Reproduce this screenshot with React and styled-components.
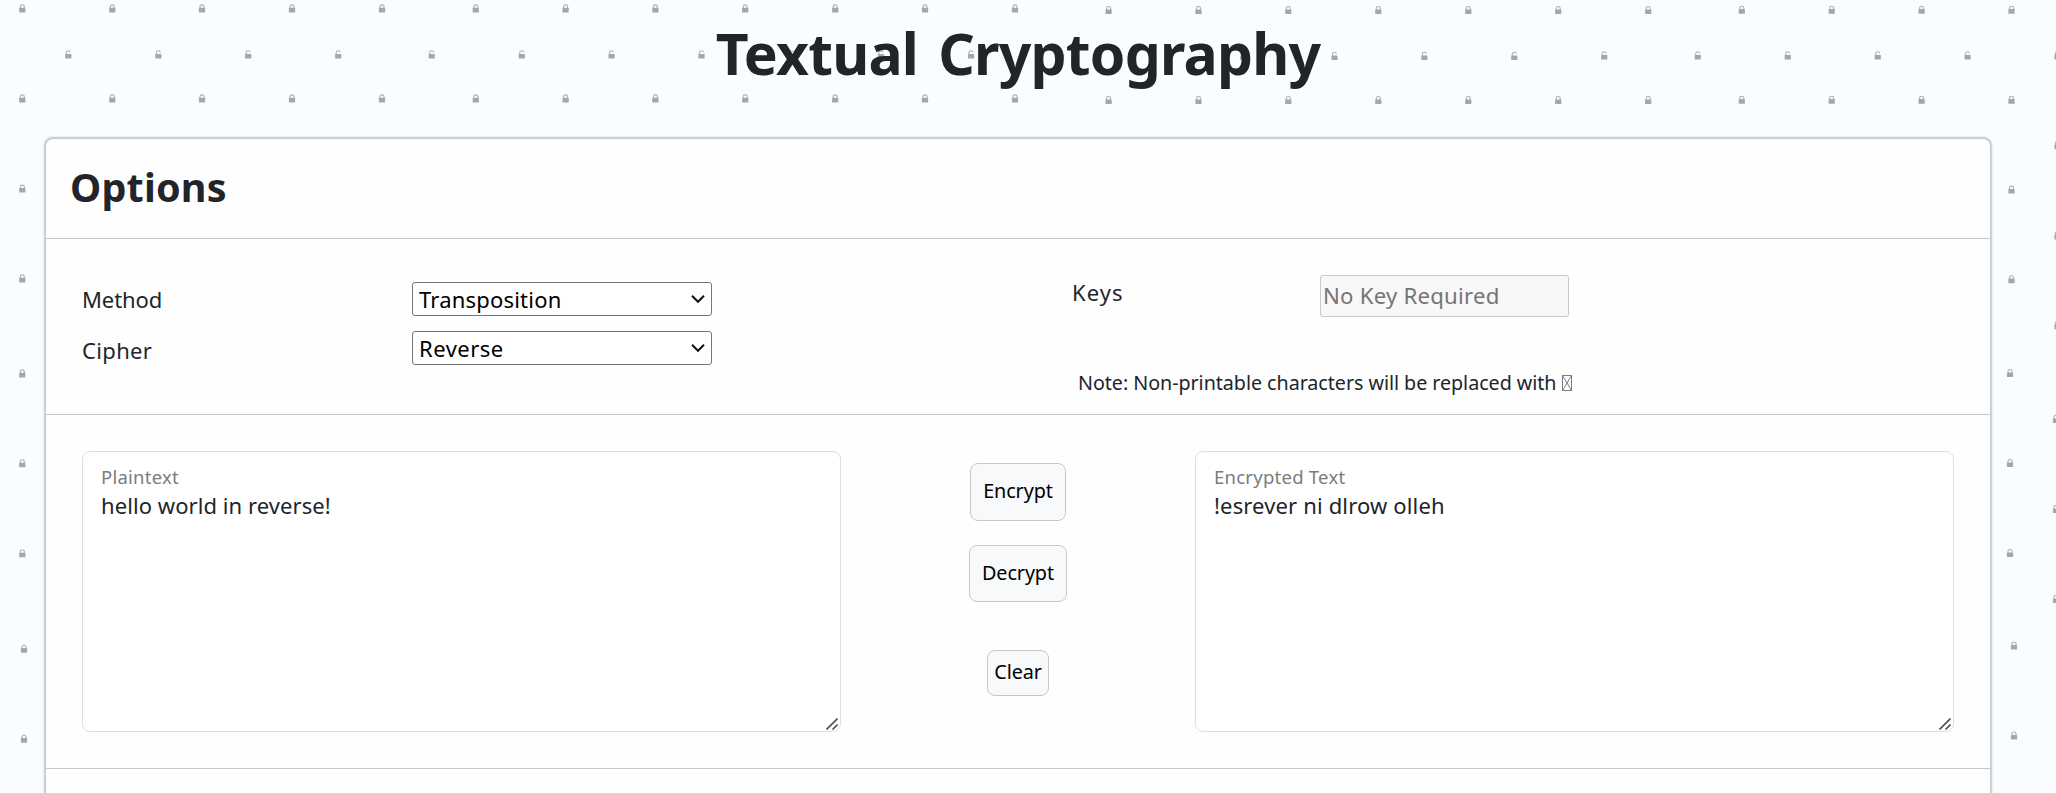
import React from 'react';
import styled, { createGlobalStyle } from 'styled-components';

const GlobalStyle = createGlobalStyle`
  * { box-sizing: border-box; }
  body {
    margin: 0;
    background: #f9fdff;
    color: #212529;
    font-family: "Noto Sans", "Open Sans", sans-serif;
    overflow: hidden;
  }
  input, select, textarea, button { font-family: inherit; margin: 0; }
`;

const Page = styled.main`
  position: relative;
  height: 793px;
  overflow: hidden;
  display: flex;
  flex-direction: column;
  padding: 0 65px 0 45px;
`;

const Backdrop = styled.svg`
  position: absolute;
  inset: 0;
  width: 2056px;
  height: 793px;
  fill: #a4a7aa;
`;

const Title = styled.h1`
  position: relative;
  flex: none;
  height: 138px;
  margin: 0;
  padding-top: 17px;
  font-size: 57px;
  line-height: 72px;
  letter-spacing: -0.75px;
  word-spacing: 6px;
  text-align: center;
`;

const Card = styled.section`
  position: relative;
  flex: 1;
  background: #fefefe;
  border: 1px solid #c8c9cd;
  border-bottom: 0;
  border-radius: 8px 8px 0 0;
  box-shadow: 0 0 2px 0.5px rgba(0, 0, 0, 0.22);
`;

const CardHeader = styled.header`
  height: 100px;
  padding: 20px 0 0 24px;
  border-bottom: 1px solid #c5c6c9;
`;

const Heading = styled.h2`
  margin: 0;
  font-size: 39.5px;
  line-height: 56px;
  letter-spacing: 0.2px;
`;

const OptionsBody = styled.div`
  display: flex;
  height: 176px;
  border-bottom: 1px solid #c5c6c9;
`;

const MethodColumn = styled.div`
  width: 990px;
  padding: 43px 0 0 36px;
  display: flex;
  flex-direction: column;
  gap: 15px;
`;

const KeysColumn = styled.div`
  width: 920px;
  padding: 36px 0 0 36px;
`;

const Field = styled.div`
  display: flex;
  align-items: flex-start;
`;

const Label = styled.label`
  width: ${(p) => p.$width}px;
  padding-top: ${(p) => p.$drop || 0}px;
  font-size: 22px;
  line-height: 34px;
  letter-spacing: ${(p) => p.$spacing}px;
`;

const SelectBox = styled.div`
  position: relative;
  width: 300px;
  height: 34px;
`;

const Select = styled.select`
  appearance: none;
  width: 100%;
  height: 34px;
  padding: 0 6px;
  border: 1px solid #767676;
  border-radius: 3px;
  background: #fff;
  color: #000;
  font-size: 22px;
  line-height: 30px;
  letter-spacing: ${(p) => p.$spacing}px;
`;

const Chevron = styled.svg`
  position: absolute;
  right: 6px;
  top: 12px;
  width: 16px;
  height: 10px;
  fill: none;
  stroke: #111;
  stroke-width: 2;
  pointer-events: none;
`;

const KeyInput = styled.input`
  width: 249px;
  height: 42px;
  padding: 0 2px 1px;
  border: 1px solid #c9cacc;
  border-radius: 3px;
  background: #f8f8f8;
  font-size: 22.2px;
  letter-spacing: 0.22px;
  &::placeholder { color: #757575; opacity: 1; }
`;

const Note = styled.p`
  display: flex;
  align-items: center;
  margin: 51px 0 0 6px;
  font-size: 19.7px;
  line-height: 30px;
  letter-spacing: -0.04px;
`;

const Replacement = styled.svg`
  width: 10px;
  height: 16px;
  margin-left: 6px;
  fill: none;
  stroke: #6b6e71;
  stroke-width: 0.9;
`;

const Workspace = styled.div`
  display: flex;
  justify-content: space-between;
  height: 354px;
  padding: 36px 36px 0;
  border-bottom: 1px solid #c5c6c9;
`;

const TextPanel = styled.div`
  position: relative;
  display: flex;
  flex-direction: column;
  width: 759px;
  height: 281px;
  border: 1px solid #dedfe1;
  border-radius: 8px;
  background: #fff;
  padding: 13px 18px;
`;

const PanelLabel = styled.label`
  font-size: 18.5px;
  line-height: 24px;
  letter-spacing: 0.25px;
  color: #7a7c7e;
`;

const PanelText = styled.textarea`
  flex: 1;
  padding: 0;
  border: 0;
  outline: 0;
  resize: none;
  overflow: hidden;
  background: transparent;
  color: #212529;
  font-size: 22px;
  line-height: 32px;
  letter-spacing: ${(p) => p.$spacing}px;
`;

const Grip = styled.svg`
  position: absolute;
  right: 2px;
  bottom: 1px;
  width: 12px;
  height: 12px;
  fill: none;
  stroke: #4f5154;
  stroke-width: 1.6;
`;

const Actions = styled.div`
  display: flex;
  flex-direction: column;
  align-items: center;
  padding-top: 12px;
`;

const ActionButton = styled.button`
  width: ${(p) => p.$width}px;
  height: ${(p) => p.$height}px;
  margin-bottom: ${(p) => p.$gap}px;
  padding: 0 0 2px;
  border: 1px solid #c5c7ca;
  border-radius: 8px;
  background: #f8f9fb;
  color: #000;
  font-size: 19.8px;
  line-height: 28px;
  letter-spacing: -0.1px;
`;

const CLOSED_X = [22.3, 112.3, 202, 292, 382, 475.8, 565.6, 655.4, 745.2, 835.2, 925, 1015, 1108.6, 1198.5, 1288.3, 1378.3, 1468.3, 1558.2, 1648.2, 1741.8, 1831.7, 1921.6, 2011.5];
const OPEN_X = [68.3, 158.4, 248.2, 338.2, 431.7, 521.8, 611.6, 701.5, 791.3, 881, 971, 1061, 1153, 1243.3, 1334.5, 1424.4, 1514.3, 1604.2, 1697.8, 1787.8, 1877.8, 1967.6, 2057.5];

const closedY = (x) => (x < 1100 ? 8.4 : x < 1700 ? 10 : 9.7);
const openY = (x) => (x < 1100 ? 54.5 : x < 1600 ? 56 : 55.5);

const LOCKS = [
  ...CLOSED_X.flatMap((x) => [[x, closedY(x)], [x, closedY(x) + 90]]),
  [22.3, 188.6], [22.3, 278.4], [22.3, 373.4], [22.3, 463.3], [22.3, 553.3], [24, 648.7], [24, 738.7],
  [2011.5, 189.6], [2011.5, 279.2], [2010, 373], [2010, 463], [2010, 553], [2014, 645.5], [2014, 735.5],
];

const OPEN_LOCKS = [
  ...OPEN_X.map((x) => [x, openY(x)]),
  [2057.5, 145.3], [2057.5, 235.5], [2057.5, 325.3], [2056, 419], [2056, 509], [2056, 599],
];

const Padlock = ({ x, y, open }) => (
  <g transform={`translate(${x} ${y})`}>
    <rect x="-3.1" y="-0.6" width="6.2" height="4.6" rx="0.5" />
    <path
      d={open ? 'M-2 0V-2Q-2-3.8 0-3.8Q1.7-3.8 2-2.2' : 'M-2 0V-1.8Q-2-3.5 0-3.5Q2-3.5 2-1.8V0'}
      fill="none"
      stroke="#acafb2"
      strokeWidth="1.1"
    />
  </g>
);

const Dropdown = ({ value, spacing }) => (
  <SelectBox>
    <Select defaultValue={value} $spacing={spacing}>
      <option>{value}</option>
    </Select>
    <Chevron viewBox="0 0 16 10"><path d="M2 1.8l6 6L14 1.8" /></Chevron>
  </SelectBox>
);

const TextArea = ({ label, value, spacing }) => (
  <TextPanel>
    <PanelLabel>{label}</PanelLabel>
    <PanelText defaultValue={value} $spacing={spacing} spellCheck={false} />
    <Grip viewBox="0 0 12 12"><path d="M0.5 11.5L11.5 0.5M6.5 11.5L11.5 6.5" /></Grip>
  </TextPanel>
);

export default function App() {
  return (
    <Page>
      <GlobalStyle />
      <Backdrop viewBox="0 0 2056 793">
        {LOCKS.map(([x, y]) => <Padlock key={`${x}-${y}`} x={x} y={y} />)}
        {OPEN_LOCKS.map(([x, y]) => <Padlock key={`${x}-${y}`} x={x} y={y} open />)}
      </Backdrop>
      <Title>Textual Cryptography</Title>
      <Card>
        <CardHeader>
          <Heading>Options</Heading>
        </CardHeader>
        <OptionsBody>
          <MethodColumn>
            <Field>
              <Label $width={330} $spacing={-0.1}>Method</Label>
              <Dropdown value="Transposition" spacing={0.2} />
            </Field>
            <Field>
              <Label $width={330} $drop={2} $spacing={0.35}>Cipher</Label>
              <Dropdown value="Reverse" spacing={0.5} />
            </Field>
          </MethodColumn>
          <KeysColumn>
            <Field>
              <Label $width={248} $spacing={1.1}>Keys</Label>
              <KeyInput placeholder="No Key Required" disabled />
            </Field>
            <Note>
              Note: Non-printable characters will be replaced with
              <Replacement viewBox="0 0 10 16"><path d="M0.5 0.5h9v15h-9zM0.5 0.5l9 15M9.5 0.5l-9 15" /></Replacement>
            </Note>
          </KeysColumn>
        </OptionsBody>
        <Workspace>
          <TextArea label="Plaintext" value="hello world in reverse!" spacing={0.07} />
          <Actions>
            <ActionButton $width={96} $height={58} $gap={24}>Encrypt</ActionButton>
            <ActionButton $width={98} $height={57} $gap={48}>Decrypt</ActionButton>
            <ActionButton $width={62} $height={46} $gap={0}>Clear</ActionButton>
          </Actions>
          <TextArea label="Encrypted Text" value="!esrever ni dlrow olleh" spacing={0.15} />
        </Workspace>
      </Card>
    </Page>
  );
}
